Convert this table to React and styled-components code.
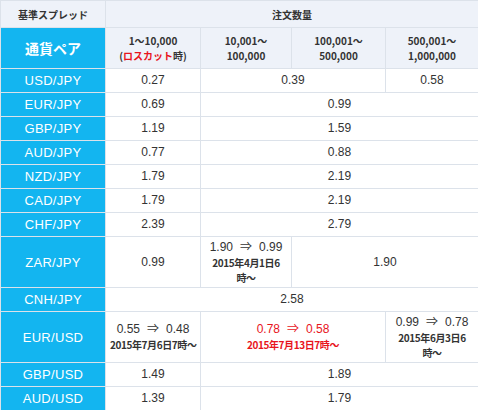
import React from "react";
import styled, { createGlobalStyle } from "styled-components";

const GlobalStyle = createGlobalStyle`
  body {
    margin: 0;
    background: #fff;
    font-family: "Liberation Sans", "Noto Sans CJK JP", sans-serif;
  }
`;

const Table = styled.table`
  width: 478px;
  border-collapse: collapse;
  table-layout: fixed;
  color: #333;
  font-size: 12px;
  td,
  th {
    border: 1px solid #dce2ea;
    text-align: center;
    padding: 0 4px;
  }
`;

const HeadCell = styled.th`
  background: #eef2f9;
  font-size: 10px;
  font-weight: bold;
  font-family: "Noto Sans CJK JP", sans-serif;
  color: #333;
  height: ${(p) => p.$h || 26}px;
  line-height: 15px;
`;

const PairHead = styled.th`
  background: #13b5f0;
  color: #fff;
  font-size: 14px;
  font-weight: bold;
  font-family: "Noto Sans CJK JP", sans-serif;
`;

const Pair = styled.th`
  background: #13b5f0;
  color: #fff;
  font-size: 13px;
  font-weight: normal;
  letter-spacing: 0.3px;
  height: ${(p) => p.$h || 23}px;
`;

const Cell = styled.td`
  color: ${(p) => (p.$red ? "#e8141c" : "#333")};
  line-height: 15px;
`;

const Red = styled.span`
  color: #e8141c;
`;

const Arrow = styled.span`
  margin: 0 7px;
`;

const DateLine = styled.div`
  font-size: 10px;
  font-weight: bold;
  font-family: "Noto Sans CJK JP", sans-serif;
  line-height: 15px;
  letter-spacing: -0.4px;
  white-space: nowrap;
`;

const Change = ({ from, to, date }) => (
  <>
    <div>
      {from}
      <Arrow>⇒</Arrow>
      {to}
    </div>
    {date.map((line) => (
      <DateLine key={line}>{line}</DateLine>
    ))}
  </>
);

const simple = [
  ["EUR/JPY", "0.69", "0.99"],
  ["GBP/JPY", "1.19", "1.59"],
  ["AUD/JPY", "0.77", "0.88"],
  ["NZD/JPY", "1.79", "2.19"],
  ["CAD/JPY", "1.79", "2.19"],
  ["CHF/JPY", "2.39", "2.79"],
];

export default function App() {
  return (
    <>
      <GlobalStyle />
      <Table>
        <colgroup>
          <col style={{ width: 105 }} />
          <col style={{ width: 95 }} />
          <col style={{ width: 91 }} />
          <col style={{ width: 94 }} />
          <col style={{ width: 93 }} />
        </colgroup>
        <tbody>
          <tr>
            <HeadCell>基準スプレッド</HeadCell>
            <HeadCell colSpan={4}>注文数量</HeadCell>
          </tr>
          <tr>
            <PairHead>通貨ペア</PairHead>
            <HeadCell $h={40}>
              1〜10,000
              <br />(<Red>ロスカット</Red>時)
            </HeadCell>
            <HeadCell $h={40}>
              10,001〜
              <br />
              100,000
            </HeadCell>
            <HeadCell $h={40}>
              100,001〜
              <br />
              500,000
            </HeadCell>
            <HeadCell $h={40}>
              500,001〜
              <br />
              1,000,000
            </HeadCell>
          </tr>
          <tr>
            <Pair>USD/JPY</Pair>
            <Cell>0.27</Cell>
            <Cell colSpan={2}>0.39</Cell>
            <Cell>0.58</Cell>
          </tr>
          {simple.map(([pair, a, b]) => (
            <tr key={pair}>
              <Pair>{pair}</Pair>
              <Cell>{a}</Cell>
              <Cell colSpan={3}>{b}</Cell>
            </tr>
          ))}
          <tr>
            <Pair $h={50}>ZAR/JPY</Pair>
            <Cell>0.99</Cell>
            <Cell>
              <Change from="1.90" to="0.99" date={["2015年4月1日6", "時〜"]} />
            </Cell>
            <Cell colSpan={2}>1.90</Cell>
          </tr>
          <tr>
            <Pair>CNH/JPY</Pair>
            <Cell colSpan={4}>2.58</Cell>
          </tr>
          <tr>
            <Pair $h={50}>EUR/USD</Pair>
            <Cell>
              <Change from="0.55" to="0.48" date={["2015年7月6日7時〜"]} />
            </Cell>
            <Cell colSpan={2} $red>
              <Change from="0.78" to="0.58" date={["2015年7月13日7時〜"]} />
            </Cell>
            <Cell>
              <Change from="0.99" to="0.78" date={["2015年6月3日6", "時〜"]} />
            </Cell>
          </tr>
          <tr>
            <Pair>GBP/USD</Pair>
            <Cell>1.49</Cell>
            <Cell colSpan={3}>1.89</Cell>
          </tr>
          <tr>
            <Pair>AUD/USD</Pair>
            <Cell>1.39</Cell>
            <Cell colSpan={3}>1.79</Cell>
          </tr>
        </tbody>
      </Table>
    </>
  );
}
